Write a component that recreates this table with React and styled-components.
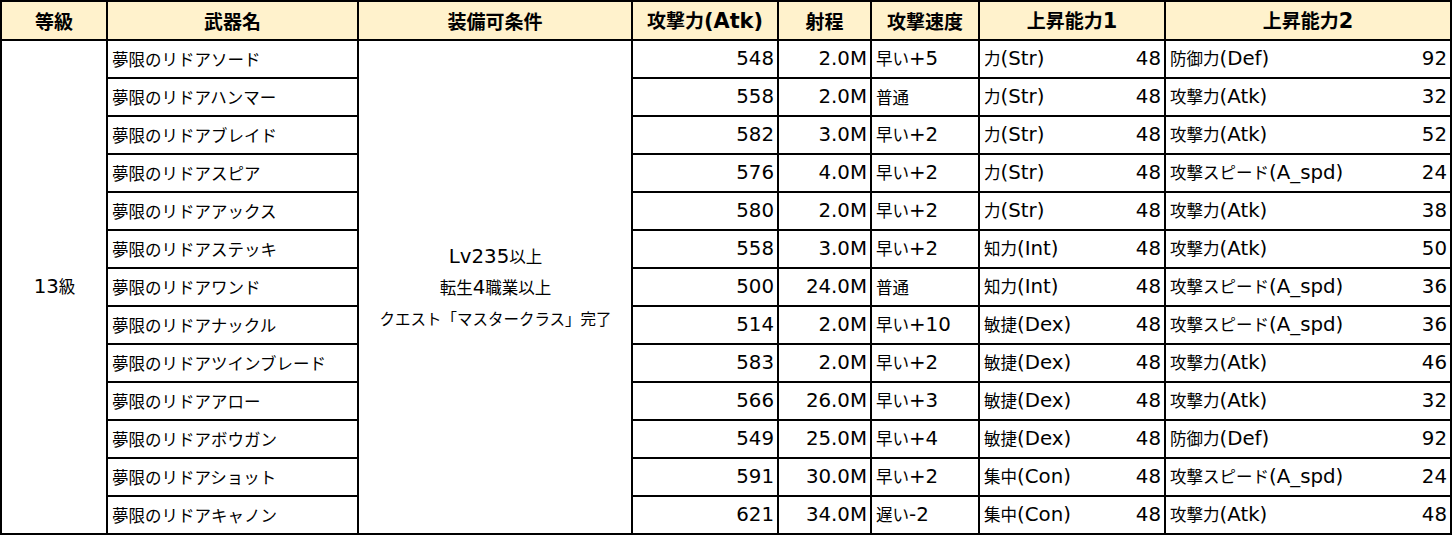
import React from "react";
import styled, { createGlobalStyle } from "styled-components";

const GlobalStyle = createGlobalStyle`
  body {
    margin: 0;
    background: #fff;
    font-family: "Noto Sans CJK JP", "DejaVu Sans", sans-serif;
  }
`;

const Table = styled.table`
  border-collapse: collapse;
  table-layout: fixed;
  width: 1450px;
  font-size: 16.5px;
  color: #000;
`;

const Th = styled.th`
  background: #fff2cc;
  border: 2px solid #000;
  height: 37px;
  padding: 0;
  font-size: 19px;
  font-weight: bold;
  text-align: center;
  line-height: 1;
`;

const Td = styled.td`
  border: 2px solid #000;
  height: 36px;
  padding: 0 3px 0 4px;
  white-space: nowrap;
  text-align: ${(p) => p.$align || "left"};
  vertical-align: middle;
  line-height: 1;
`;

const Latin = styled.span`
  font-family: "DejaVu Sans", sans-serif;
  font-size: ${(p) => (p.$head ? "1.1em" : "1.2em")};
`;

const Split = styled.div`
  display: flex;
  justify-content: space-between;
  align-items: center;
`;

const Cond = styled.div`
  display: flex;
  flex-direction: column;
  align-items: center;
`;

const CondLine = styled.span`
  line-height: 30px;
  font-size: ${(p) => p.$size || "16.5px"};
`;

// wrap ASCII runs in a wider latin face, like Meiryo's roman glyphs
const tx = (s, head) =>
  String(s)
    .split(/([\x20-\x7e]+)/)
    .filter(Boolean)
    .map((part, i) =>
      /^[\x20-\x7e]+$/.test(part) ? (
        <Latin key={i} $head={head}>
          {part}
        </Latin>
      ) : (
        part
      )
    );

const cols = [106, 251, 274, 146, 93, 108, 186, 286];
const heads = ["等級", "武器名", "装備可条件", "攻撃力(Atk)", "射程", "攻撃速度", "上昇能力1", "上昇能力2"];

const rows = [
  ["夢限のリドアソード", 548, "2.0M", "早い+5", "力(Str)", 48, "防御力(Def)", 92],
  ["夢限のリドアハンマー", 558, "2.0M", "普通", "力(Str)", 48, "攻撃力(Atk)", 32],
  ["夢限のリドアブレイド", 582, "3.0M", "早い+2", "力(Str)", 48, "攻撃力(Atk)", 52],
  ["夢限のリドアスピア", 576, "4.0M", "早い+2", "力(Str)", 48, "攻撃スピード(A_spd)", 24],
  ["夢限のリドアアックス", 580, "2.0M", "早い+2", "力(Str)", 48, "攻撃力(Atk)", 38],
  ["夢限のリドアステッキ", 558, "3.0M", "早い+2", "知力(Int)", 48, "攻撃力(Atk)", 50],
  ["夢限のリドアワンド", 500, "24.0M", "普通", "知力(Int)", 48, "攻撃スピード(A_spd)", 36],
  ["夢限のリドアナックル", 514, "2.0M", "早い+10", "敏捷(Dex)", 48, "攻撃スピード(A_spd)", 36],
  ["夢限のリドアツインブレード", 583, "2.0M", "早い+2", "敏捷(Dex)", 48, "攻撃力(Atk)", 46],
  ["夢限のリドアアロー", 566, "26.0M", "早い+3", "敏捷(Dex)", 48, "攻撃力(Atk)", 32],
  ["夢限のリドアボウガン", 549, "25.0M", "早い+4", "敏捷(Dex)", 48, "防御力(Def)", 92],
  ["夢限のリドアショット", 591, "30.0M", "早い+2", "集中(Con)", 48, "攻撃スピード(A_spd)", 24],
  ["夢限のリドアキャノン", 621, "34.0M", "遅い-2", "集中(Con)", 48, "攻撃力(Atk)", 48],
];

export default function App() {
  return (
    <>
      <GlobalStyle />
      <Table>
        <colgroup>
          {cols.map((w, i) => (
            <col key={i} style={{ width: w }} />
          ))}
        </colgroup>
        <thead>
          <tr>
            {heads.map((h) => (
              <Th key={h}>{tx(h, true)}</Th>
            ))}
          </tr>
        </thead>
        <tbody>
          {rows.map((r, i) => (
            <tr key={r[0]}>
              {i === 0 && (
                <Td rowSpan={rows.length} $align="center">
                  {tx("13級")}
                </Td>
              )}
              <Td>{r[0]}</Td>
              {i === 0 && (
                <Td rowSpan={rows.length} $align="center">
                  <Cond>
                    <CondLine>{tx("Lv235以上")}</CondLine>
                    <CondLine>{tx("転生4職業以上")}</CondLine>
                    <CondLine $size="15.5px">クエスト「マスタークラス」完了</CondLine>
                  </Cond>
                </Td>
              )}
              <Td $align="right">{tx(r[1])}</Td>
              <Td $align="right">{tx(r[2])}</Td>
              <Td>{tx(r[3])}</Td>
              <Td>
                <Split>
                  <span>{tx(r[4])}</span>
                  <span>{tx(r[5])}</span>
                </Split>
              </Td>
              <Td>
                <Split>
                  <span>{tx(r[6])}</span>
                  <span>{tx(r[7])}</span>
                </Split>
              </Td>
            </tr>
          ))}
        </tbody>
      </Table>
    </>
  );
}
